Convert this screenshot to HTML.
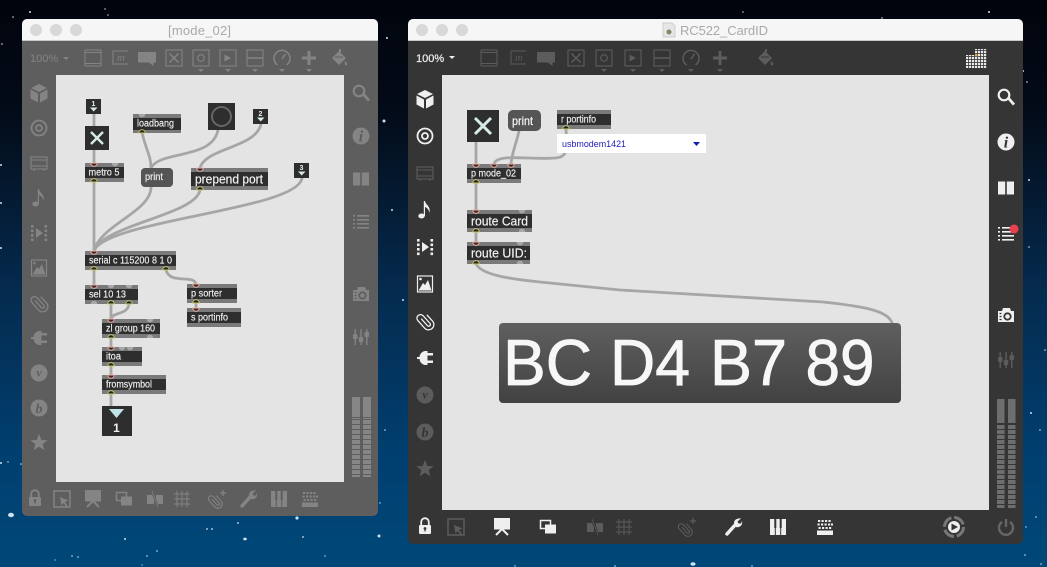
<!DOCTYPE html>
<html><head><meta charset="utf-8"><style>
html,body{margin:0;padding:0;background:#02060e}
svg{display:block}
text{font-family:"Liberation Sans",sans-serif}
.o{fill:#7a7a7a}.d{fill:#2e2e2e}
.t{fill:#f1f1f1;font-size:10px;stroke:#f1f1f1;stroke-width:.15}
.T{fill:#f1f1f1;font-size:14px;stroke:#f1f1f1;stroke-width:.2}
.c{fill:none;stroke:#a6a6a6;stroke-width:2.8;stroke-linecap:round}
.ic{fill:currentColor;stroke:none}
.s{fill:none;stroke:currentColor}
</style></head><body>
<svg xmlns="http://www.w3.org/2000/svg" width="1047" height="567" viewBox="0 0 1047 567">
<defs>
<linearGradient id="bg" x1="0" y1="0" x2="0" y2="1">
<stop offset="0" stop-color="#01040c"/><stop offset=".2" stop-color="#030b18"/><stop offset=".5" stop-color="#052a4d"/><stop offset=".8" stop-color="#003f70"/><stop offset="1" stop-color="#004878"/>
</linearGradient>
<linearGradient id="num" x1="0" y1="0" x2="0" y2="1"><stop offset="0" stop-color="#5f5f5f"/><stop offset="1" stop-color="#424242"/></linearGradient>
<pattern id="dots" width="3" height="3" patternUnits="userSpaceOnUse"><rect width="2.2" height="2.2" fill="#e8e8e8"/></pattern>
<pattern id="segL" width="5" height="5" patternUnits="userSpaceOnUse"><rect width="10" height="4" fill="#868686"/></pattern>
<pattern id="segR" width="5" height="5" patternUnits="userSpaceOnUse"><rect width="10" height="4" fill="#6e6e6e"/></pattern>

<g id="in"><path d="M-3.300-1A3.300 3.300 0 0 0 3.300-1Z" fill="#4a2626" stroke="#e4b4aa" stroke-width=".9"/></g>
<g id="out"><path d="M-3.300 1A3.300 3.300 0 0 1 3.300 1Z" fill="#222" stroke="#c9c96a" stroke-width=".9"/></g>
<g id="np"><path d="M-3.300-1A3.300 3.300 0 0 0 3.300-1Z" fill="#a8a8a8"/></g>
<g id="npb"><path d="M-3.300 1A3.300 3.300 0 0 1 3.300 1Z" fill="#a8a8a8"/></g>

<g id="cube" class="ic"><path d="M0-9 8-5 0-1-8-5Z"/><path d="M-8.500-3.500-1 .5V9.500L-8.500 5.500Z"/><path d="M8.500-3.500 1 .5V9.500L8.500 5.500Z"/></g>
<g id="target" class="s"><circle r="7.500" stroke-width="1.800"/><circle r="3" stroke-width="1.800"/></g>
<g id="bpat" class="s" stroke-width="1.100"><rect x="-8" y="-6" width="16" height="12"/><path d="M-8-3H8M-8 3H8M-5 6V8M5 6V8"/></g>
<g id="note" class="ic"><ellipse cx="-3.500" cy="6" rx="3.200" ry="2.500"/><path d="M-1.200 6V-9H0C.5-5 6-4 4.500 3 3.800-1 1.500-2.500 0-3V6Z"/></g>
<g id="media" class="ic"><path d="M-8-8h2.600v2.600h-2.600zM-8-3.500h2.600v2.600h-2.600zM-8 1h2.600v2.600h-2.600zM-8 5.500h2.600v2.600h-2.600zM5.500-8h2.600v2.600h-2.600zM5.500-3.500h2.600v2.600h-2.600zM5.500 1h2.600v2.600h-2.600zM5.500 5.500h2.600v2.600h-2.600z"/><path d="M-3-5 4 0-3 5Z"/></g>
<g id="image"><rect x="-7.500" y="-8" width="15" height="16" class="s" stroke-width="1.200"/><path class="ic" d="M-6.500 6.500-2-1 0 1 3-4 6.500 6.500Z"/><circle class="ic" cx="-4.500" cy="-5" r="1.300"/></g>
<g id="clip"><path class="s" stroke-width="1.500" transform="rotate(-42) scale(.85)" d="M-1.500-5V6a2 2 0 0 0 4 0V-6a4.200 4.200 0 0 0-8.400 0V6a6.200 6.200 0 0 0 12.400 0V-4"/></g>
<g id="plug" class="ic"><path d="M-8-1h2.500a6.500 6.500 0 0 1 6-6h2V7h-2a6.500 6.500 0 0 1-6-6H-8z"/><path d="M2-5H8v2.500H2zM2 2.500H8V5H2z"/></g>
<g id="vv"><circle class="ic" r="8.500"/><text y="3.500" text-anchor="middle" style="font:italic bold 12px 'Liberation Serif',serif;fill:var(--bg)">v</text></g>
<g id="bb"><circle class="ic" r="8.500"/><text y="5" text-anchor="middle" style="font:italic bold 14px 'Liberation Serif',serif;fill:var(--bg)">b</text></g>
<g id="star" class="ic"><path d="M0-9 2.400-3 8.600-2.800 3.700 1.100 5.400 7.300 0 3.700-5.400 7.300-3.700 1.100-8.600-2.800-2.400-3Z"/></g>
<g id="search" class="s"><circle cx="-2" cy="-2" r="5.300" stroke-width="2.200"/><path d="M2-.0 L8 7" transform="translate(0 .6)" stroke-width="2.800"/></g>
<g id="info"><circle class="ic" r="8.500"/><text y="5.500" text-anchor="middle" style="font:italic bold 16px 'Liberation Serif',serif;fill:var(--bg)">i</text></g>
<g id="book" class="ic"><path d="M-8-6.500H-.8V6.500H-8ZM.8-6.500H8V6.500H.8Z"/></g>
<g id="list" class="ic"><path d="M-8-7h2v1.600h-2zM-4-7H8v1.600H-4zM-8-3h2v1.600h-2zM-4-3H8v1.600H-4zM-8 1h2v1.600h-2zM-4 1H8v1.600H-4zM-8 5h2v1.600h-2zM-4 5H8v1.600H-4z"/></g>
<g id="cam"><path class="ic" d="M-8-4H-4L-3-7H4L5-4H8V7H-8Z"/><circle cx="1.500" cy="1.500" r="3.200" fill="none" stroke="var(--bg)" stroke-width="1.800"/><path d="M-6.500-1.500h2M-6.500 1.500h2M-6.500 4.500h2" stroke="var(--bg)" stroke-width="1.200"/></g>
<g id="mixer" class="ic"><path d="M-6.500-8h1.400V8h-1.400zM-.7-8H.7V8H-.7zM5.100-8h1.400V8H5.100z"/><rect x="-8" y="-3" width="4.500" height="5" rx="1"/><rect x="-2.200" y="0" width="4.500" height="5" rx="1"/><rect x="3.500" y="-5" width="4.500" height="5" rx="1"/></g>
<g id="power" class="s" stroke-width="2.400"><path d="M-4-5A7 7 0 1 0 4-5"/><path d="M0-8V0"/></g>

<g id="tbp" class="s" stroke-width="1"><path d="M-8-8H8M-8 8H8M-8-8V8M8-8V8"/><path d="M-8-5.500H8M-8 5.500H8" /></g>
<g id="tmsg"><path class="s" stroke-width="1" d="M-7-7H8M-7-7V6H8"/><text x="1" y="3" text-anchor="middle" style="font:italic 9px 'Liberation Sans',sans-serif;fill:currentColor">m</text></g>
<g id="tcom" class="ic"><path d="M-9-6H9V4.500H6.500L6.500 8 2 4.500H-9Z"/></g>
<g id="tx" class="s" stroke-width="1.100"><rect x="-8" y="-8" width="16" height="16"/><path d="M-4.500-4.500 4.500 4.500M4.500-4.500-4.500 4.500" stroke-width="1.500"/></g>
<g id="tbtn" class="s" stroke-width="1.100"><rect x="-8" y="-8" width="16" height="16"/><circle r="3.300"/></g>
<g id="tply"><rect x="-8" y="-8" width="16" height="16" class="s" stroke-width="1.100"/><path class="ic" d="M-3.500-3.500 3 0-3.500 3.500Z"/></g>
<g id="tsl" class="s" stroke-width="1.100"><rect x="-8" y="-8" width="16" height="16"/><path d="M-8 0H8" stroke-width="1.500"/></g>
<g id="tdial" class="s" stroke-width="1.500"><path d="M-4.500 7A8 8 0 1 1 4.500 7"/><path d="M0 1 3.500-4"/></g>
<g id="tplus" class="ic"><path d="M-1.500-7H1.500V-1.500H7V1.500H1.500V7H-1.500V1.500H-7V-1.500H-1.500Z"/></g>
<g id="paint"><path class="ic" d="M-8 0-1-7 6 0-1 7ZM5 3C7 5 8 6 7 7 6 8 4 7 5 3Z"/><path d="M-5-1H3" stroke="var(--bg)" stroke-width="1"/><path class="ic" d="M-1-9 1-9 1-6-1-6Z"/></g>

<g id="lock"><path class="s" stroke-width="1.800" d="M-3.800-1V-4a3.800 3.800 0 0 1 7.600 0V-1"/><rect class="ic" x="-6" y="-1" width="12" height="9" rx="1"/><circle cy="2.500" r="1.400" fill="var(--bg)"/><rect x="-.6" y="2.500" width="1.200" height="3" fill="var(--bg)"/></g>
<g id="edit"><path class="s" stroke-width="1.500" d="M-8-8H8V8H-8Z"/><path class="ic" d="M-2-2 6.500 1.500 3 3 6.500 8 4.500 8 1.500 4 -.5 6.500Z" stroke="var(--bg)"/></g>
<g id="pres"><rect class="ic" x="-8" y="-8" width="16" height="11.500"/><path class="s" stroke-width="2" d="M0 3-6 9M0 3 6 9"/></g>
<g id="win"><rect x="-7.500" y="-6.500" width="10" height="8" class="s" stroke-width="1.500"/><rect x="-3" y="-2.500" width="11" height="9" class="ic"/></g>
<g id="cord"><path class="ic" d="M-8-4H-1V5H-8ZM1-4H8V5H1Z"/><path d="M-3-8 3 8" stroke="var(--bg)" stroke-width="2.400"/><path d="M-3-8 3 8" class="s" stroke-width=".8"/></g>
<g id="grid" class="s" stroke-width="1"><path d="M-5-8V8M0-8V8M5-8V8M-8-5H8M-8 0H8M-8 5H8"/></g>
<g id="clipp"><g transform="translate(-2 2)"><path class="s" stroke-width="1.500" transform="rotate(-42) scale(.7)" d="M-1.500-5V6a2 2 0 0 0 4 0V-6a4.200 4.200 0 0 0-8.400 0V6a6.200 6.200 0 0 0 12.400 0V-4"/></g><path class="s" stroke-width="1.300" d="M6-9V-3M3-6H9"/></g>
<g id="wrench"><path class="s" stroke-width="3.500" stroke-linecap="round" d="M-6 7 3-3"/><path class="ic" d="M1-4C1-7 4-9 8-8.500L4.500-5.500 5.500-3.500 8-3.500 9-6C10-2 7 1 2.500 0Z"/></g>
<g id="piano"><rect class="ic" x="-8" y="-8" width="16" height="16"/><path d="M-2.700-8V8M2.700-8V8" stroke="var(--bg)" stroke-width="1"/><path d="M-3.700-8h2V1h-2zM1.700-8h2V1h-2z" fill="var(--bg)"/></g>
<g id="kbd" class="ic"><path d="M-7-7h2.200v2h-2.200zM-3.500-7h2.200v2h-2.200zM0-7h2.200v2H0zM3.500-7h2.200v2H3.500zM-7.500-3.500h2.200v2h-2.200zM-4-3.500h2.200v2H-4zM-.5-3.500h2.200v2H-.5zM3-3.500h2.200v2H3zM6-3.500h2v2H6zM-6.500 0h2.200v2h-2.200zM-3 0h2.200v2H-3zM.5 0h2.200v2H.5zM4 0h2.200v2H4zM-8 3.500H8V8H-8z"/></g>
<g id="tri" class="ic"><path d="M-3 0H3L0 3Z"/></g>
</defs>

<rect width="1047" height="567" fill="url(#bg)"/>
<g fill="#cfe0f0">
<circle cx="30" cy="12" r="1"/><circle cx="13" cy="17" r=".8"/><circle cx="105" cy="9" r=".7"/><circle cx="108" cy="15" r=".7"/><circle cx="2" cy="44" r=".8"/><circle cx="387" cy="38" r="1"/><circle cx="384" cy="121" r="1.500"/><circle cx="989" cy="12" r="1"/><circle cx="882" cy="18" r=".8"/><circle cx="743" cy="12" r=".7"/><circle cx="1023" cy="71" r="1"/><circle cx="1027" cy="82" r=".8"/>
<circle cx="1" cy="165" r="1"/><circle cx="1" cy="203" r="1"/><circle cx="1" cy="248" r="1"/><circle cx="1" cy="463" r="1"/><circle cx="1031" cy="413" r="1"/><circle cx="1029" cy="247" r=".8"/><circle cx="1029" cy="180" r="1"/><circle cx="392" cy="210" r="1"/><circle cx="403" cy="300" r="1"/><circle cx="385" cy="430" r=".8"/>
<ellipse cx="11" cy="515" rx="3" ry="2.200"/><circle cx="8" cy="462" r=".7"/><circle cx="21" cy="464" r=".8"/><circle cx="125" cy="539" r="1"/><circle cx="78" cy="557" r=".8"/><circle cx="55" cy="560" r=".6"/><circle cx="72" cy="556" r=".8"/><circle cx="147" cy="556" r=".8"/><circle cx="157" cy="551" r=".8"/><circle cx="142" cy="565" r=".6"/><circle cx="207" cy="529" r=".9"/><circle cx="212" cy="529" r=".9"/><circle cx="238" cy="523" r=".9"/><ellipse cx="245" cy="539" rx="1.800" ry="1.400"/><circle cx="297" cy="518" r="1.600"/><circle cx="303" cy="537" r=".9"/><circle cx="325" cy="556" r=".7"/><circle cx="379" cy="536" r="1.500"/><circle cx="380" cy="503" r=".7"/>
<ellipse cx="693" cy="564" rx="2.600" ry="1.800"/><circle cx="615" cy="566" r=".8"/><circle cx="515" cy="566" r=".7"/><circle cx="752" cy="566" r=".7"/><circle cx="1036" cy="517" r=".8"/><circle cx="1025" cy="555" r=".8"/><circle cx="1041" cy="564" r=".8"/><circle cx="1026" cy="527" r=".7"/><circle cx="1040" cy="430" r=".8"/><circle cx="1045" cy="350" r=".8"/>
</g>

<!-- LEFT WINDOW -->
<g style="--bg:#5e5e5e;color:#848484">
<rect x="22" y="19" width="356" height="497" rx="5" fill="#5e5e5e"/>
<path d="M22 41V24a5 5 0 0 1 5-5H373a5 5 0 0 1 5 5V41Z" fill="#f6f6f6"/>
<rect x="22" y="40" width="356" height="1" fill="#c8c8c8"/>
<circle cx="36" cy="30" r="6" fill="#d8d8d8"/><circle cx="56" cy="30" r="6" fill="#d8d8d8"/><circle cx="76" cy="30" r="6" fill="#d8d8d8"/>
<text x="168" y="35" textLength="63" style="font-size:13px;fill:#a9a9a9">[mode_02]</text>
<text x="30" y="62" style="font-size:11px;fill:#848484">100%</text>
<use href="#tri" x="66" y="57"/>
<use href="#tbp" x="93" y="58"/><use href="#tmsg" x="120" y="58"/><use href="#tcom" x="147" y="58"/><use href="#tx" x="174" y="58"/><use href="#tbtn" x="201" y="58"/><use href="#tply" x="228" y="58"/><use href="#tsl" x="255" y="58"/><use href="#tdial" x="282" y="58"/><use href="#tplus" x="309" y="58"/><use href="#paint" x="340" y="58"/>
<use href="#tri" x="201" y="69"/><use href="#tri" x="228" y="69"/><use href="#tri" x="255" y="69"/><use href="#tri" x="282" y="69"/><use href="#tri" x="309" y="69"/>
<use href="#cube" x="39" y="93"/><use href="#target" x="39" y="128"/><use href="#bpat" x="39" y="163"/><use href="#note" x="39" y="198"/><use href="#media" x="39" y="233"/><use href="#image" x="39" y="268"/><use href="#clip" x="39" y="303"/><use href="#plug" x="39" y="338"/><use href="#vv" x="39" y="373"/><use href="#bb" x="39" y="408"/><use href="#star" x="39" y="443"/>
<use href="#search" x="361" y="93"/><use href="#info" x="361" y="136"/><use href="#book" x="361" y="179"/><use href="#list" x="361" y="222"/><use href="#cam" x="361" y="294"/><use href="#mixer" x="361" y="337"/>
<rect x="352" y="397" width="8" height="20" fill="#868686"/><rect x="363" y="397" width="8" height="20" fill="#868686"/>
<rect x="352" y="418" width="8" height="59" fill="url(#segL)"/><rect x="363" y="418" width="8" height="59" fill="url(#segL)"/>
<use href="#lock" x="35" y="498"/><use href="#edit" x="62" y="499"/><use href="#pres" x="93" y="498"/><use href="#win" x="124" y="499"/><use href="#cord" x="155" y="499"/><use href="#grid" x="182" y="499"/><use href="#clipp" x="217" y="499"/><use href="#wrench" x="248" y="499"/><use href="#piano" x="279" y="499"/><use href="#kbd" x="310" y="499"/>

<rect x="56" y="75" width="288" height="407" fill="#e4e4e4"/>

<path class="c" d="M94 114V126M94 150V163M94 182V251M142 132C145 148 151 155 151 168M218 130C212 160 160 150 151 168M261 124C256 148 205 148 200 168M151 187C151 212 100 225 94 251M200 190C196 215 102 225 94 251M302 178C298 210 105 220 94 251M94 270V285M166 270C170 285 194 274 196 284M111 304V319M129 304C128 315 112 312 111 319M111 338V347M111 366V375M111 394V406M196 303V308"/>

<rect x="86" y="99" width="15" height="15" fill="#2e2e2e"/><text x="93.500" y="106" text-anchor="middle" style="font-size:7px;font-weight:bold;fill:#eee">1</text><path d="M90 107.500H97.500L93.700 111.500Z" fill="#d8e8e8"/>
<rect x="85" y="126" width="24" height="24" fill="#2e2e2e"/><path d="M91 132 103 144M103 132 91 144" stroke="#d6ebe8" stroke-width="2.400"/>
<rect class="o" x="85" y="163" width="39" height="19"/><rect class="d" x="85" y="167" width="39" height="11"/><text class="t" x="88.500" y="175.500" textLength="31" lengthAdjust="spacingAndGlyphs">metro 5</text>
<rect class="o" x="133" y="114" width="48" height="19"/><rect class="d" x="133" y="118" width="48" height="12"/><text class="t" x="137" y="126.500" textLength="37" lengthAdjust="spacingAndGlyphs">loadbang</text>
<rect x="208" y="103" width="27" height="27" fill="#2e2e2e"/><circle cx="221.500" cy="116.500" r="9.500" fill="none" stroke="#666" stroke-width="2"/>
<rect x="253" y="109" width="15" height="15" fill="#2e2e2e"/><text x="260.500" y="116" text-anchor="middle" style="font-size:7px;font-weight:bold;fill:#eee">2</text><path d="M257 117.500H264.500L260.700 121.500Z" fill="#d8e8e8"/>
<rect x="141" y="168" width="32" height="19" rx="4" fill="#555"/><text class="t" x="145" y="180" textLength="18" lengthAdjust="spacingAndGlyphs">print</text>
<rect class="o" x="191" y="168" width="77" height="22"/><rect class="d" x="191" y="172" width="77" height="14"/><text class="T" x="195" y="183.500" textLength="68" lengthAdjust="spacingAndGlyphs" style="font-size:13px">prepend port</text>
<rect x="294" y="163" width="15" height="15" fill="#2e2e2e"/><text x="301.500" y="170" text-anchor="middle" style="font-size:7px;font-weight:bold;fill:#eee">3</text><path d="M298 171.500H305.500L301.700 175.500Z" fill="#d8e8e8"/>
<rect class="o" x="85" y="251" width="91" height="19"/><rect class="d" x="85" y="255" width="91" height="11"/><text class="t" x="89" y="263.500" textLength="83" lengthAdjust="spacingAndGlyphs">serial c 115200 8 1 0</text>
<rect class="o" x="85" y="285" width="53" height="19"/><rect class="d" x="85" y="289" width="53" height="11"/><text class="t" x="89" y="297.500" textLength="37" lengthAdjust="spacingAndGlyphs">sel 10 13</text>
<rect class="o" x="187" y="284" width="50" height="19"/><rect class="d" x="187" y="288" width="50" height="11"/><text class="t" x="191" y="296.500" textLength="31" lengthAdjust="spacingAndGlyphs">p sorter</text>
<rect class="o" x="187" y="308" width="54" height="19"/><rect class="d" x="187" y="312" width="54" height="11"/><text class="t" x="191" y="320.500" textLength="37" lengthAdjust="spacingAndGlyphs">s portinfo</text>
<rect class="o" x="102" y="319" width="58" height="19"/><rect class="d" x="102" y="323" width="58" height="11"/><text class="t" x="106" y="331.500" textLength="49" lengthAdjust="spacingAndGlyphs">zl group 160</text>
<rect class="o" x="102" y="347" width="40" height="19"/><rect class="d" x="102" y="351" width="40" height="11"/><text class="t" x="106" y="359.500" textLength="15" lengthAdjust="spacingAndGlyphs">itoa</text>
<rect class="o" x="102" y="375" width="64" height="19"/><rect class="d" x="102" y="379" width="64" height="11"/><text class="t" x="106" y="387.500" textLength="46" lengthAdjust="spacingAndGlyphs">fromsymbol</text>
<rect x="102" y="406" width="30" height="30" fill="#2e2e2e"/><path d="M109 409H124L116.500 418Z" fill="#bfe3e6"/><text x="116.500" y="432" text-anchor="middle" style="font-size:12px;font-weight:bold;fill:#eee">1</text>

<use href="#in" x="94" y="164"/><use href="#out" x="94" y="181"/><use href="#np" x="115" y="164"/>
<use href="#out" x="142" y="132"/><use href="#np" x="142" y="115"/>
<use href="#in" x="200" y="169"/><use href="#out" x="200" y="189"/>
<use href="#in" x="94" y="252"/><use href="#out" x="94" y="269"/><use href="#out" x="166" y="269"/>
<use href="#in" x="94" y="286"/><use href="#np" x="111" y="286"/><use href="#np" x="129" y="286"/><use href="#npb" x="94" y="303"/><use href="#out" x="111" y="303"/><use href="#out" x="129" y="303"/>
<use href="#in" x="196" y="285"/><use href="#out" x="196" y="302"/><use href="#in" x="196" y="309"/>
<use href="#in" x="111" y="320"/><use href="#np" x="150" y="320"/><use href="#out" x="111" y="337"/><use href="#npb" x="150" y="337"/>
<use href="#in" x="111" y="348"/><use href="#np" x="122" y="348"/><use href="#np" x="130" y="348"/><use href="#out" x="111" y="365"/>
<use href="#in" x="111" y="376"/><use href="#out" x="111" y="393"/>
</g>

<!-- RIGHT WINDOW -->
<g style="--bg:#353535;color:#efefef">
<rect x="408" y="19" width="615" height="525" rx="5" fill="#353535"/>
<path d="M408 41V24a5 5 0 0 1 5-5H1018a5 5 0 0 1 5 5V41Z" fill="#f6f6f6"/>
<rect x="408" y="40" width="615" height="1" fill="#c8c8c8"/>
<circle cx="422" cy="30" r="6" fill="#d8d8d8"/><circle cx="442" cy="30" r="6" fill="#d8d8d8"/><circle cx="462" cy="30" r="6" fill="#d8d8d8"/>
<path d="M663 23H672L675 26V37H663Z" fill="#e6e6e6" stroke="#c0c0c0" stroke-width=".7"/><circle cx="669" cy="32" r="2.500" fill="#7d8a6a"/>
<text x="680" y="35" textLength="88" style="font-size:13px;fill:#a9a9a9">RC522_CardID</text>
<text x="416" y="62" style="font-size:11px;fill:#f0f0f0;stroke:#f0f0f0;stroke-width:.2">100%</text>
<use href="#tri" x="452" y="56"/>
<g style="color:#5c5c5c">
<use href="#tbp" x="489" y="58"/><use href="#tmsg" x="518" y="58"/><use href="#tcom" x="546" y="58"/><use href="#tx" x="576" y="58"/><use href="#tbtn" x="604" y="58"/><use href="#tply" x="633" y="58"/><use href="#tsl" x="662" y="58"/><use href="#tdial" x="691" y="58"/><use href="#tplus" x="720" y="58"/><use href="#paint" x="766" y="58"/>
<use href="#tri" x="604" y="69"/><use href="#tri" x="633" y="69"/><use href="#tri" x="662" y="69"/><use href="#tri" x="691" y="69"/><use href="#tri" x="720" y="69"/>
</g>
<rect x="975" y="49" width="12" height="6" fill="url(#dots)"/><rect x="966" y="55" width="21" height="13" fill="url(#dots)"/><rect x="975" y="54" width="2.500" height="2.500" fill="#e0b040"/>

<use href="#cube" x="425" y="99"/><use href="#target" x="425" y="136"/><use href="#bpat" x="425" y="173" style="color:#5c5c5c"/><use href="#note" x="425" y="210"/><use href="#media" x="425" y="247"/><use href="#image" x="425" y="284"/><use href="#clip" x="425" y="321"/><use href="#plug" x="425" y="358"/><use href="#vv" x="425" y="395" style="color:#5c5c5c"/><use href="#bb" x="425" y="432" style="color:#5c5c5c"/><use href="#star" x="425" y="469" style="color:#5c5c5c"/>
<use href="#search" x="1006" y="97"/><use href="#info" x="1006" y="142"/><use href="#book" x="1006" y="188"/><use href="#list" x="1006" y="234"/><circle cx="1014" cy="229" r="4.500" fill="#e8404f"/><use href="#cam" x="1006" y="315"/><use href="#mixer" x="1006" y="360" style="color:#5c5c5c"/>
<rect x="997" y="399" width="7.500" height="24" fill="#6e6e6e"/><rect x="1008" y="399" width="7.500" height="24" fill="#6e6e6e"/>
<rect x="997" y="425" width="7.500" height="83" fill="url(#segR)"/><rect x="1008" y="425" width="7.500" height="83" fill="url(#segR)"/>
<use href="#power" x="1006" y="527" style="color:#666"/>
<use href="#lock" x="425" y="526"/><use href="#edit" x="456" y="527" style="color:#5c5c5c"/><use href="#pres" x="502" y="526"/><use href="#win" x="548" y="527"/><use href="#cord" x="595" y="527" style="color:#5c5c5c"/><use href="#grid" x="624" y="527" style="color:#5c5c5c"/><use href="#clipp" x="687" y="527" style="color:#5c5c5c"/><use href="#wrench" x="733" y="527"/><use href="#piano" x="778" y="527"/><use href="#kbd" x="825" y="527"/>
<circle cx="954" cy="527" r="9.500" fill="none" stroke="#777" stroke-width="3" stroke-dasharray="12 2.900"/><circle cx="954" cy="527" r="6" fill="#eee"/><path d="M951.500 523.500 958 527 951.500 530.500Z" fill="#353535"/>

<rect x="442" y="75" width="547" height="435" fill="#e4e4e4"/>

<path class="c" d="M476 142V164M519 131C516 145 512 152 511 164M476 183V210M476 232V242"/>
<path class="c" d="M566 129C567 150 568 157 555 158C530 160 497 153 494 164"/>
<path class="c" d="M476 264C482 275 510 279 540 282L620 290L823 302C860 306 888 310 892 323"/>

<rect x="467" y="110" width="32" height="32" fill="#2e2e2e"/><path d="M475 118 491 134M491 118 475 134" stroke="#d6ebe8" stroke-width="3"/>
<rect x="508" y="110" width="33" height="21" rx="5" fill="#555"/><text x="512" y="125" textLength="21" lengthAdjust="spacingAndGlyphs" style="font-size:12px;fill:#f6f6f6;stroke:#f6f6f6;stroke-width:.2">print</text>
<rect class="o" x="557" y="110" width="54" height="19"/><rect class="d" x="557" y="114" width="54" height="11"/><text class="t" x="561" y="122.500" textLength="35" lengthAdjust="spacingAndGlyphs">r portinfo</text>
<rect x="557" y="134" width="149" height="19" fill="#fff"/><text x="562" y="147" textLength="64" lengthAdjust="spacingAndGlyphs" style="font-size:9.500px;fill:#2020c0">usbmodem1421</text><path d="M693 142H700L696.500 146Z" fill="#1020b0"/>
<rect class="o" x="467" y="164" width="54" height="19"/><rect class="d" x="467" y="168" width="54" height="11"/><text class="t" x="471" y="176.500" textLength="45" lengthAdjust="spacingAndGlyphs">p mode_02</text>
<rect class="o" x="467" y="210" width="65" height="22"/><rect class="d" x="467" y="214" width="65" height="14"/><text class="T" x="471" y="225.500" textLength="57" lengthAdjust="spacingAndGlyphs" style="font-size:13px">route Card</text>
<rect class="o" x="467" y="242" width="63" height="22"/><rect class="d" x="467" y="246" width="63" height="14"/><text class="T" x="471" y="257.500" textLength="56" lengthAdjust="spacingAndGlyphs" style="font-size:13px">route UID:</text>
<use href="#in" x="476" y="165"/><use href="#in" x="494" y="165"/><use href="#in" x="511" y="165"/><use href="#out" x="476" y="182"/>
<use href="#out" x="566" y="128"/>
<use href="#in" x="476" y="211"/><use href="#np" x="522" y="211"/><use href="#out" x="476" y="231"/><use href="#npb" x="522" y="231"/>
<use href="#in" x="476" y="243"/><use href="#np" x="520" y="243"/><use href="#out" x="476" y="263"/><use href="#npb" x="520" y="263"/>

<rect x="499" y="323" width="402" height="80" rx="4" fill="url(#num)"/>
<g style="font-size:65px;fill:#f7f7f7;stroke:#f7f7f7;stroke-width:.8">
<text x="503" y="385" textLength="89" lengthAdjust="spacingAndGlyphs">BC</text>
<text x="610" y="385" textLength="80" lengthAdjust="spacingAndGlyphs">D4</text>
<text x="710" y="385" textLength="77" lengthAdjust="spacingAndGlyphs">B7</text>
<text x="805.500" y="385" textLength="69" lengthAdjust="spacingAndGlyphs">89</text>
</g>
</g>
</svg>
</body></html>
